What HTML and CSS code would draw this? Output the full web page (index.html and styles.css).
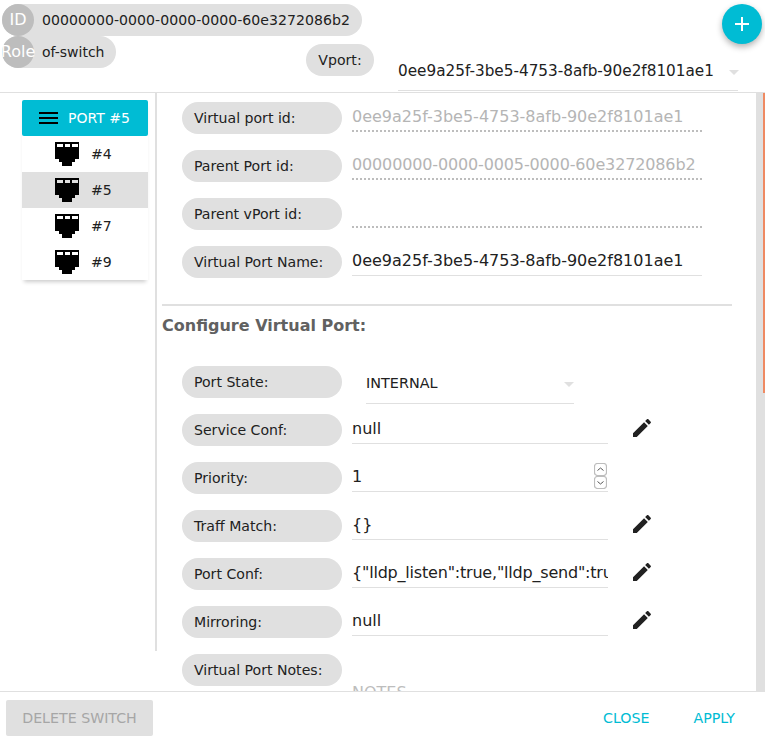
FILE: index.html
```html
<!DOCTYPE html>
<html lang="en">

<head>
    <meta charset="UTF-8">
    <meta name="viewport" content="width=device-width, initial-scale=1.0">
    <title>Edit Switch</title>
    <link rel="stylesheet" href="styles.css">
</head>

<body>

    <svg class="icon-defs" width="0" height="0">
        <symbol id="icon-port" viewBox="0 0 24 24">
            <path fill="#000" fill-rule="evenodd" d="M0 0H24V17H20V20H17V24H7V20H4V17H0ZM2 2V5H8V2ZM10 2V5H15V2ZM17 2V5H23V2Z" />
        </symbol>
        <symbol id="icon-edit" viewBox="0 0 24 24">
            <path fill="#212121" d="M3 17.25V21h3.75L17.81 9.94l-3.75-3.75L3 17.25zM20.71 7.04c.39-.39.39-1.02 0-1.41l-2.34-2.34c-.39-.39-1.02-.39-1.41 0l-1.83 1.83 3.75 3.75 1.83-1.83z" />
        </symbol>
    </svg>

    <div id="dialog">
        <header id="top">
            <div class="chips">
                <div class="chip chip-id"><span class="avatar">ID</span><span>00000000-0000-0000-0000-60e3272086b2</span></div>
                <div class="chip chip-role"><span class="avatar">Role</span><span>of-switch</span></div>
            </div>
            <div class="vport">
                <span class="vport-label">Vport:</span>
                <div class="select vport-select">
                    <span>0ee9a25f-3be5-4753-8afb-90e2f8101ae1</span>
                    <i class="caret"></i>
                </div>
            </div>
            <button class="fab" type="button" aria-label="Add">
                <svg viewBox="0 0 24 24" width="24" height="24"><path fill="#fff" d="M19 13h-6v6h-2v-6H5v-2h6V5h2v6h6v2z" /></svg>
            </button>
        </header>

        <div id="middle">
            <aside id="sidebar">
                <ul class="ports">
                    <li class="ports-head">
                        <span class="burger"><i></i><i></i><i></i></span>
                        <span>PORT #5</span>
                    </li>
                    <li class="port"><svg width="24" height="24"><use href="#icon-port" /></svg><span>#4</span></li>
                    <li class="port selected"><svg width="24" height="24"><use href="#icon-port" /></svg><span>#5</span></li>
                    <li class="port"><svg width="24" height="24"><use href="#icon-port" /></svg><span>#7</span></li>
                    <li class="port"><svg width="24" height="24"><use href="#icon-port" /></svg><span>#9</span></li>
                </ul>
            </aside>

            <main id="content">
                <div class="row">
                    <label class="pill">Virtual port id:</label>
                    <div class="field readonly wide">0ee9a25f-3be5-4753-8afb-90e2f8101ae1</div>
                </div>
                <div class="row">
                    <label class="pill">Parent Port id:</label>
                    <div class="field readonly wide parent-id">00000000-0000-0005-0000-60e3272086b2</div>
                </div>
                <div class="row">
                    <label class="pill">Parent vPort id:</label>
                    <div class="field readonly wide"></div>
                </div>
                <div class="row">
                    <label class="pill">Virtual Port Name:</label>
                    <div class="field wide">0ee9a25f-3be5-4753-8afb-90e2f8101ae1</div>
                </div>

                <hr class="divider">
                <h3 class="section-title">Configure Virtual Port:</h3>

                <div class="row">
                    <label class="pill">Port State:</label>
                    <div class="select state-select">
                        <span>INTERNAL</span>
                        <i class="caret"></i>
                    </div>
                </div>
                <div class="row">
                    <label class="pill">Service Conf:</label>
                    <div class="field">null</div>
                    <svg class="edit" width="24" height="24"><use href="#icon-edit" /></svg>
                </div>
                <div class="row">
                    <label class="pill">Priority:</label>
                    <div class="field">
                        1
                        <span class="stepper">
                            <svg width="13" height="13" viewBox="0 0 13 13"><rect x=".5" y=".5" width="12" height="12" rx="3" fill="#fff" stroke="#bdbdbd" stroke-width="1.2" /><path d="M3.5 7.5 6.5 5 9.5 7.5" fill="none" stroke="#555" /></svg>
                            <svg width="13" height="13" viewBox="0 0 13 13"><rect x=".5" y=".5" width="12" height="12" rx="3" fill="#fff" stroke="#bdbdbd" stroke-width="1.2" /><path d="M3.5 5.5 6.5 8 9.5 5.5" fill="none" stroke="#555" /></svg>
                        </span>
                    </div>
                </div>
                <div class="row">
                    <label class="pill">Traff Match:</label>
                    <div class="field">{}</div>
                    <svg class="edit" width="24" height="24"><use href="#icon-edit" /></svg>
                </div>
                <div class="row">
                    <label class="pill">Port Conf:</label>
                    <div class="field port-conf">{"lldp_listen":true,"lldp_send":true}</div>
                    <svg class="edit" width="24" height="24"><use href="#icon-edit" /></svg>
                </div>
                <div class="row">
                    <label class="pill">Mirroring:</label>
                    <div class="field">null</div>
                    <svg class="edit" width="24" height="24"><use href="#icon-edit" /></svg>
                </div>
                <div class="row notes-row">
                    <label class="pill">Virtual Port Notes:</label>
                    <div class="notes">NOTES</div>
                </div>
            </main>

            <div id="scrollbar"><i class="thumb"></i></div>
        </div>

        <footer id="actions">
            <button class="btn disabled" type="button">DELETE SWITCH</button>
            <div class="actions-right">
                <button class="btn link" type="button">CLOSE</button>
                <button class="btn link" type="button">APPLY</button>
            </div>
        </footer>
    </div>

</body>

</html>
```

FILE: styles.css
```css
* {
    box-sizing: border-box;
}

html,
body {
    height: 100%;
}

body {
    margin: 0;
    background-color: #fff;
    color: #212121;
    font-family: "DejaVu Sans", sans-serif;
    font-size: 14.1px;
    overflow: hidden;
}

.icon-defs {
    display: none;
}

#dialog {
    display: flex;
    flex-direction: column;
    height: 744px;
}

/* top bar */
#top {
    position: relative;
    display: flex;
    height: 93px;
    flex: none;
    padding: 4px 0 0 2px;
    border-bottom: 1px solid #e0e0e0;
}

.chips {
    display: flex;
    flex-direction: column;
    align-items: flex-start;
    width: 304px;
    flex: none;
}

.chip {
    display: flex;
    align-items: center;
    height: 32px;
    padding-right: 12px;
    border-radius: 16px;
    background-color: #e0e0e0;
    white-space: nowrap;
}

.chip-id {
    width: 360px;
    flex: none;
    letter-spacing: 0.03px;
}

.chip-role {
    font-size: 14px;
}

.avatar {
    display: flex;
    justify-content: center;
    width: 32px;
    height: 32px;
    margin-right: 8px;
    border-radius: 50%;
    background-color: #bdbdbd;
    color: #fff;
    font-size: 16px;
    line-height: 32px;
    white-space: nowrap;
}

.vport {
    display: flex;
    align-items: flex-start;
    padding-top: 40px;
}

.vport-label {
    width: 68px;
    height: 32px;
    border-radius: 16px;
    background-color: #e0e0e0;
    line-height: 32px;
    text-align: center;
}

.select {
    display: flex;
    align-items: center;
    justify-content: space-between;
    border-bottom: 1px solid #e0e0e0;
}

.vport-select {
    width: 340px;
    height: 48px;
    margin: -1px 0 0 24px;
    padding: 8px 0 0;
    font-size: 15.25px;
}

.vport-select .caret {
    margin: 3px -1px 0 0;
}

.caret {
    width: 0;
    height: 0;
    border-left: 5px solid transparent;
    border-right: 5px solid transparent;
    border-top: 5px solid #e0e0e0;
}

.fab {
    position: absolute;
    top: 4px;
    left: 722px;
    display: flex;
    align-items: center;
    justify-content: center;
    width: 40px;
    height: 40px;
    padding: 0;
    border: none;
    border-radius: 50%;
    background-color: #00bcd4;
    box-shadow: 0 3px 6px rgba(0, 0, 0, 0.3);
}

/* middle part */
#middle {
    display: flex;
    flex: 1;
    min-height: 0;
    border-bottom: 1px solid #e0e0e0;
}

#sidebar {
    width: 157px;
    height: 558px;
    flex: none;
    padding: 7px 0 0 22px;
    border-right: 2px solid #e0e0e0;
}

.ports {
    width: 126px;
    margin: 0;
    padding: 0;
    list-style: none;
    box-shadow: 0 4px 4px -2px rgba(0, 0, 0, 0.2);
}

.ports-head {
    display: flex;
    align-items: center;
    gap: 10px;
    height: 36px;
    padding-left: 17px;
    border-radius: 2px;
    background-color: #00bcd4;
    color: #fff;
    font-size: 14px;
}

.burger {
    display: flex;
    flex-direction: column;
    gap: 3px;
    width: 19px;
}

.burger i {
    height: 2px;
    background-color: #000;
}

.port {
    display: flex;
    align-items: center;
    gap: 12px;
    height: 36px;
    padding-left: 33px;
}

.port.selected {
    background-color: #e0e0e0;
}

#content {
    flex: 1;
    min-width: 0;
    padding: 9px 0 0 5px;
    overflow: hidden;
}

.row {
    display: flex;
    align-items: flex-start;
    height: 32px;
    margin-bottom: 16px;
    padding-left: 20px;
}

.pill {
    width: 160px;
    height: 32px;
    flex: none;
    padding-left: 12px;
    border-radius: 16px;
    background-color: #e0e0e0;
    line-height: 32px;
    white-space: nowrap;
}

.field {
    position: relative;
    width: 256px;
    height: 30px;
    margin-left: 10px;
    border-bottom: 1px solid #e0e0e0;
    font-size: 16px;
    line-height: 30px;
    white-space: nowrap;
    overflow: hidden;
}

.field.wide {
    width: 350px;
}

.field.readonly {
    border-bottom: 2px dotted #bdbdbd;
    color: #b5b5b5;
}

.parent-id {
    letter-spacing: -0.14px;
}

.port-conf {
    letter-spacing: -0.2px;
}

.edit {
    flex: none;
    margin: 2px 0 0 22px;
}

.stepper {
    position: absolute;
    top: 1px;
    right: 1px;
    display: flex;
    flex-direction: column;
}

.divider {
    height: 2px;
    margin: 26px 0 0;
    width: 570px;
    border: none;
    background-color: #e0e0e0;
}

.section-title {
    height: 60px;
    margin: 0;
    padding-top: 10px;
    color: #616161;
    font-size: 16px;
    font-weight: bold;
}

.state-select {
    width: 208px;
    height: 38px;
    margin-left: 24px;
    padding-bottom: 4px;
    font-size: 14.4px;
}

.state-select .caret {
    margin-top: 4px;
}

.notes-row {
    height: 37px;
    margin-bottom: 0;
}

.notes {
    margin: 29px 0 0 10px;
    color: #bdbdbd;
    font-size: 16px;
}

#scrollbar {
    position: relative;
    width: 9px;
    flex: none;
    background-color: #e0e0e0;
}

.thumb {
    position: absolute;
    top: 0;
    right: 0;
    width: 2px;
    height: 300px;
    background-color: #ef8a62;
}

/* bottom buttons */
#actions {
    display: flex;
    align-items: flex-start;
    justify-content: space-between;
    flex: 0 0 52px;
    padding: 8px 30px 0 6px;
}

.actions-right {
    display: flex;
    gap: 44px;
}

.btn {
    height: 36px;
    padding: 0;
    border: none;
    border-radius: 2px;
    background: none;
    font-family: inherit;
    font-size: 14.2px;
}

.btn.disabled {
    width: 147px;
    background-color: #e0e0e0;
    color: #a6a6a6;
}

.btn.link {
    color: #00bcd4;
}
```
